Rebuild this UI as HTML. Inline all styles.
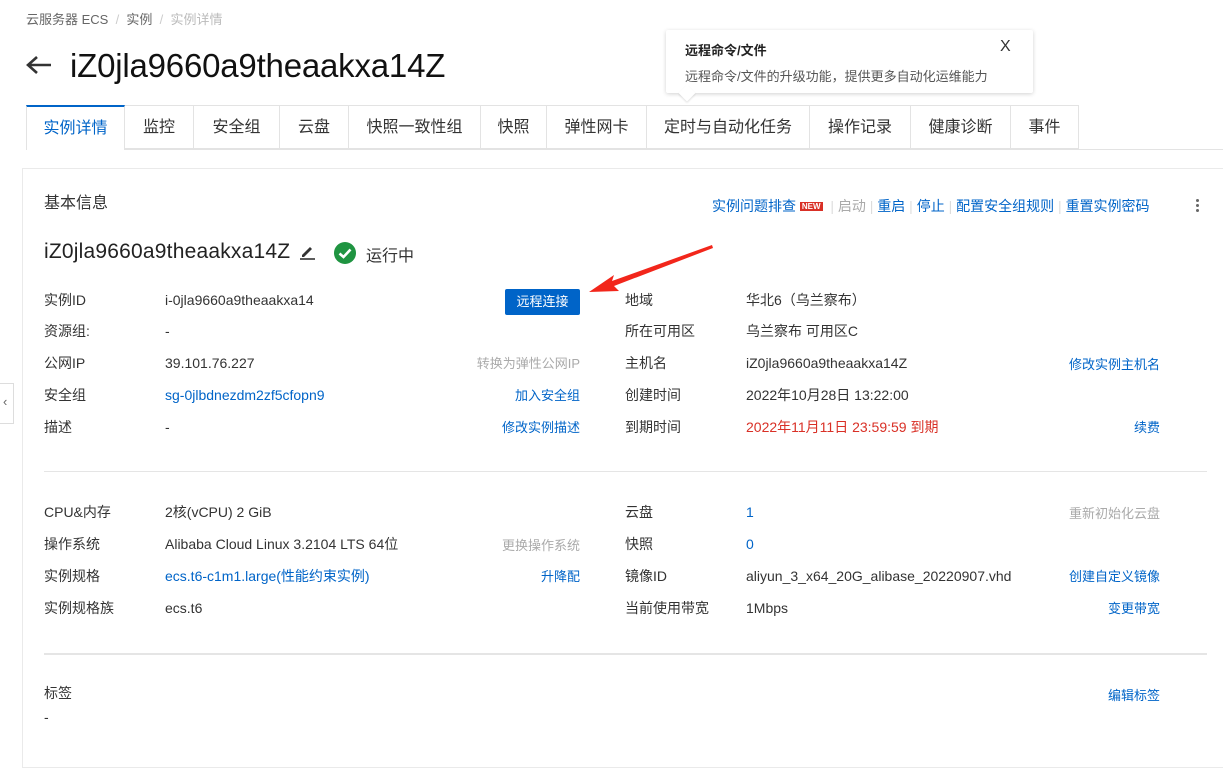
<!DOCTYPE html>
<html><head><meta charset="utf-8"><style>
*{margin:0;padding:0;box-sizing:border-box}
body{width:1223px;height:754px;overflow:hidden;background:#fff;font-family:"Liberation Sans","Noto Sans CJK SC",sans-serif;color:#333;position:relative;font-size:14px}
.a{position:absolute;white-space:nowrap}
.l{color:#0064c8}
.g{color:#aaa}
.r{text-align:right}
.tabs{position:absolute;left:26px;top:105px;height:44px;display:flex}
.tab{border:1px solid #e3e3e3;border-left:none;height:44px;line-height:44px;font-size:16px;color:#333;background:#fff;text-align:center;white-space:nowrap;overflow:hidden}
.tab:first-child{border-left:1px solid #e3e3e3;border-top:2px solid #0064c8;color:#0064c8;border-bottom:none;height:45px}
.row{font-size:14px;line-height:20px}
</style></head><body>
<div class="a" style="left:26px;top:9px;font-size:13px;color:#666">云服务器 ECS <span style="color:#ccc">&nbsp;/&nbsp;</span> 实例 <span style="color:#ccc">&nbsp;/&nbsp;</span> <span style="color:#bbb">实例详情</span></div>
<svg class="a" style="left:25px;top:55px" width="28" height="20" viewBox="0 0 28 20"><path d="M26 10H3M12 2L3 10L12 18" stroke="#333" stroke-width="2.6" fill="none"/></svg>
<div class="a" style="left:70px;top:44px;font-size:33px;color:#111;line-height:44px;letter-spacing:-0.2px">iZ0jla9660a9theaakxa14Z</div>

<div style="position:absolute;left:26px;top:149px;width:1197px;border-top:1px solid #e3e3e3"></div>
<div class="tabs">
<div class="tab" style="width:99px">实例详情</div><div class="tab" style="width:69px">监控</div><div class="tab" style="width:86px">安全组</div><div class="tab" style="width:69px">云盘</div><div class="tab" style="width:132px">快照一致性组</div><div class="tab" style="width:66px">快照</div><div class="tab" style="width:100px">弹性网卡</div><div class="tab" style="width:163px">定时与自动化任务</div><div class="tab" style="width:101px">操作记录</div><div class="tab" style="width:100px">健康诊断</div><div class="tab" style="width:68px">事件</div>
</div>

<div style="position:absolute;left:666px;top:30px;width:367px;height:63px;background:#fff;box-shadow:0 1px 4px rgba(0,0,0,.18);border-radius:2px"></div>
<div style="position:absolute;left:681px;top:87px;width:12px;height:12px;background:#fff;transform:rotate(45deg);box-shadow:1px 1px 2px rgba(0,0,0,.12)"></div>
<div class="a" style="left:685px;top:40px;font-size:13px;font-weight:bold;color:#222">远程命令/文件</div>
<div class="a" style="left:1000px;top:38px;font-size:16px;color:#333">X</div>
<div class="a" style="left:685px;top:66px;font-size:13px;color:#555">远程命令/文件的升级功能，提供更多自动化运维能力</div>

<div style="position:absolute;left:22px;top:168px;width:1210px;height:600px;border:1px solid #eaeaea"></div>
<div style="position:absolute;left:0;top:383px;width:14px;height:41px;border:1px solid #ddd;border-left:none;background:#fff"></div>
<div class="a" style="left:3px;top:394px;font-size:13px;color:#666">‹</div>

<div class="a" style="left:44px;top:189px;font-size:16px;color:#333">基本信息</div>
<div class="a" style="left:712px;top:196px;font-size:14px">
<span class="l">实例问题排查</span> <span style="background:#d93026;color:#fff;font-size:8px;padding:0 2px;font-weight:bold;vertical-align:2px">NEW</span>
<span style="color:#ddd">&nbsp;|&nbsp;</span><span class="g">启动</span><span style="color:#ddd">&nbsp;|&nbsp;</span><span class="l">重启</span><span style="color:#ddd">&nbsp;|&nbsp;</span><span class="l">停止</span><span style="color:#ddd">&nbsp;|&nbsp;</span><span class="l">配置安全组规则</span><span style="color:#ddd">&nbsp;|&nbsp;</span><span class="l">重置实例密码</span></div>
<div class="a" style="left:1196px;top:199px;width:3px;height:3px;background:#666;border-radius:50%;box-shadow:0 5px 0 #666,0 10px 0 #666"></div>

<div class="a" style="left:44px;top:238px;font-size:21px;color:#222;line-height:28px;letter-spacing:0.2px">iZ0jla9660a9theaakxa14Z</div>
<svg class="a" style="left:299px;top:243px" width="18" height="18" viewBox="0 0 18 18"><path d="M3 12L11 4L13 6L5 14H3Z" fill="#333"/><path d="M1 16H16" stroke="#333" stroke-width="1.6"/></svg>
<svg class="a" style="left:333px;top:241px" width="24" height="24" viewBox="0 0 24 24"><circle cx="12" cy="12" r="11" fill="#1f9441"/><path d="M6.5 12.5L10.5 16L17.5 8.5" stroke="#fff" stroke-width="2.6" fill="none"/></svg>
<div class="a" style="left:366px;top:242px;font-size:16px;color:#333">运行中</div>

<div class="a" style="left:505px;top:289px;width:75px;height:26px;background:#0064c8;border-radius:2px;color:#fff;font-size:13px;text-align:center;line-height:26px">远程连接</div>

<div class="row">
<div class="a" style="left:44px;top:290px">实例ID</div><div class="a" style="left:165px;top:290px">i-0jla9660a9theaakxa14</div>
<div class="a" style="left:44px;top:321px">资源组:</div><div class="a" style="left:165px;top:321px">-</div>
<div class="a" style="left:44px;top:353px">公网IP</div><div class="a" style="left:165px;top:353px">39.101.76.227</div><div class="a g r" style="right:643px;top:354px;font-size:13px">转换为弹性公网IP</div>
<div class="a" style="left:44px;top:385px">安全组</div><div class="a l" style="left:165px;top:385px">sg-0jlbdnezdm2zf5cfopn9</div><div class="a l" style="right:643px;top:386px;font-size:13px">加入安全组</div>
<div class="a" style="left:44px;top:417px">描述</div><div class="a" style="left:165px;top:417px">-</div><div class="a l" style="right:643px;top:418px;font-size:13px">修改实例描述</div>

<div class="a" style="left:625px;top:290px">地域</div><div class="a" style="left:746px;top:290px">华北6（乌兰察布）</div>
<div class="a" style="left:625px;top:321px">所在可用区</div><div class="a" style="left:746px;top:321px">乌兰察布 可用区C</div>
<div class="a" style="left:625px;top:353px">主机名</div><div class="a" style="left:746px;top:353px">iZ0jla9660a9theaakxa14Z</div><div class="a l" style="right:63px;top:355px;font-size:13px">修改实例主机名</div>
<div class="a" style="left:625px;top:385px">创建时间</div><div class="a" style="left:746px;top:385px">2022年10月28日 13:22:00</div>
<div class="a" style="left:625px;top:417px">到期时间</div><div class="a" style="left:746px;top:417px;color:#d93026">2022年11月11日 23:59:59 到期</div><div class="a l" style="right:63px;top:418px;font-size:13px">续费</div>
</div>

<div style="position:absolute;left:44px;top:471px;width:1163px;border-top:1px solid #e5e5e5"></div>

<div class="row">
<div class="a" style="left:44px;top:502px">CPU&amp;内存</div><div class="a" style="left:165px;top:502px">2核(vCPU) 2 GiB</div>
<div class="a" style="left:44px;top:534px">操作系统</div><div class="a" style="left:165px;top:534px">Alibaba Cloud Linux 3.2104 LTS 64位</div><div class="a g" style="right:643px;top:536px;font-size:13px">更换操作系统</div>
<div class="a" style="left:44px;top:566px">实例规格</div><div class="a l" style="left:165px;top:566px">ecs.t6-c1m1.large(性能约束实例)</div><div class="a l" style="right:643px;top:567px;font-size:13px">升降配</div>
<div class="a" style="left:44px;top:598px">实例规格族</div><div class="a" style="left:165px;top:598px">ecs.t6</div>

<div class="a" style="left:625px;top:502px">云盘</div><div class="a l" style="left:746px;top:502px">1</div><div class="a g" style="right:63px;top:504px;font-size:13px">重新初始化云盘</div>
<div class="a" style="left:625px;top:534px">快照</div><div class="a l" style="left:746px;top:534px">0</div>
<div class="a" style="left:625px;top:566px">镜像ID</div><div class="a" style="left:746px;top:566px">aliyun_3_x64_20G_alibase_20220907.vhd</div><div class="a l" style="right:63px;top:567px;font-size:13px">创建自定义镜像</div>
<div class="a" style="left:625px;top:598px">当前使用带宽</div><div class="a" style="left:746px;top:598px">1Mbps</div><div class="a l" style="right:63px;top:599px;font-size:13px">变更带宽</div>
</div>

<div style="position:absolute;left:44px;top:653px;width:1163px;border-top:2px solid #e5e5e5"></div>
<div class="a row" style="left:44px;top:683px">标签</div>
<div class="a row" style="left:44px;top:707px">-</div>
<div class="a l" style="right:63px;top:685px;font-size:13px">编辑标签</div>

<svg class="a" style="left:585px;top:240px" width="135" height="60" viewBox="0 0 135 60"><path d="M127 5L27 41L29 35L4 52L34 51L29 46L128 8Z" fill="#f2261b"/></svg>
</body></html>
